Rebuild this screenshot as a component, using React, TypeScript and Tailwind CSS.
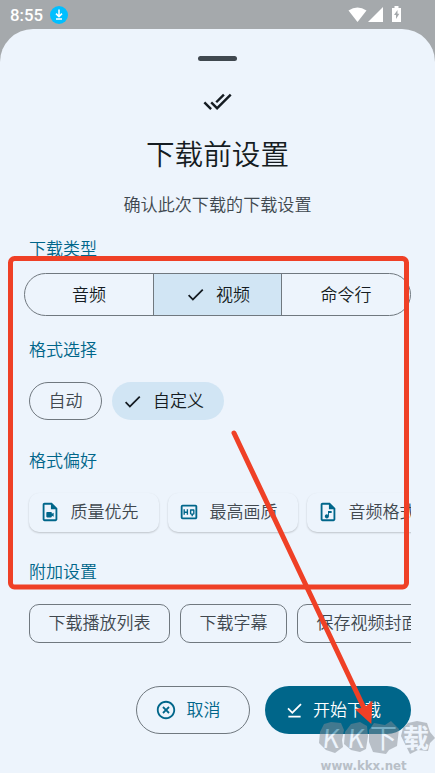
import type { ReactNode } from "react";
import {
  MdCheck,
  MdDoneAll,
  MdDownloadDone,
  MdHighlightOff,
  MdOutlineAudioFile,
  MdOutlineHighQuality,
  MdOutlineVideoFile,
} from "react-icons/md";

function StatusBar() {
  return (
    <div className="flex h-[29px] items-center pl-[10px] text-white">
      <span className="w-[33px] pt-px font-['Roboto',sans-serif] text-[16.8px] leading-[28px] font-medium">8:55</span>
      <svg className="ml-[7px]" width="18" height="18" viewBox="0 0 18 18">
        <circle cx="9" cy="9" r="9" fill="#00bfff" />
        <path d="M9 3.500v6.500M6 7.600l3 3 3-3M6 13h6" fill="none" stroke="#fff" strokeWidth="1.5" />
      </svg>
      <svg className="mr-[33px] ml-auto" width="54" height="17" viewBox="0 0 54 17" fill="#fff">
        <path d="M0.5 4.5Q9.5-1.5 18.5 4.5L9.500 16z" />
        <path d="M35 1v15H20z" />
        <path fillRule="evenodd" d="M46.500 0h4v2h2.500v14h-9V2h2.500zM49.500 4l-3.500 5h2v4l3.400-5.300h-1.900z" />
      </svg>
    </div>
  );
}

function Label({ children }: { children: ReactNode }) {
  return <h2 className="h-6 pl-[5px] text-[17px] leading-6 font-[350] text-[#00668a]">{children}</h2>;
}

function Caption({ children }: { children: ReactNode }) {
  return <span className="pb-[2px]">{children}</span>;
}

function ElevatedChip({ icon, children }: { icon: ReactNode; children: ReactNode }) {
  return (
    <div className="flex h-[39px] w-[130px] shrink-0 items-center gap-[10px] rounded-[10px] bg-[#edf4fc] pl-[9.5px] whitespace-nowrap text-[#40484f] shadow-[0_1px_2px_rgba(0,0,0,0.2)]">
      <span className="text-[22px] text-[#00668a]">{icon}</span>
      <Caption>{children}</Caption>
    </div>
  );
}

function OutlinedChip({ children }: { children: ReactNode }) {
  return (
    <div className="flex h-[39px] shrink-0 items-center rounded-[10px] border border-[#70787f] px-[18.5px] pb-[1px] whitespace-nowrap text-[#40484f]">
      <Caption>{children}</Caption>
    </div>
  );
}

function Annotation() {
  return (
    <svg className="pointer-events-none absolute inset-0" width="435" height="773" viewBox="0 0 435 773">
      <rect x="10.5" y="258.5" width="396" height="328.5" rx="4" fill="none" stroke="#ef4026" strokeWidth="5" />
      <path d="M234 433L363.500 707" stroke="#ef4026" strokeWidth="5" strokeLinecap="round" />
      <path d="M371.300 724L355 709.300L363 707.500L367 705.500L372.500 700.500z" fill="#ef4026" />
    </svg>
  );
}

function Watermark() {
  return (
    <div className="pointer-events-none absolute top-[718px] left-[317px] h-[55px] w-[118px] opacity-50">
      <svg className="absolute inset-0" width="118" height="38" viewBox="0 0 118 38" fill="#858c94">
        <path d="M3 14L7 6 14 4 24 5 27 12 25 22 26 29 18 35 9 32 2 25z" />
        <path d="M28 14L34 6 43 4 50 8 51 18 49 31 43 34 34 32 27 26z" />
        <path d="M52 12L57 5 68 7 74 3 82 11 80 28 72 32 69 36 56 34 52 24z" />
        <path d="M86 10L91 5 100 3 110 5 113 14 118 20 113 25 111 33 101 32 93 36 89 28 84 18z" />
      </svg>
      <div className="absolute top-[1px] left-[6px] flex leading-9 font-normal whitespace-nowrap text-[#edf4fc]">
        <span className="w-[25px] -skew-x-6 text-[26px]">K</span>
        <span className="w-[22px] -skew-x-6 text-[26px]">K</span>
        <span className="w-[33px] text-[27px]">下</span>
        <span className="w-[27px] text-[26px] font-bold">载</span>
      </div>
      <div className="absolute top-[40px] left-[3.500px] font-['DejaVu_Sans',sans-serif] text-[11.800px] leading-4 font-bold whitespace-nowrap text-[#858c94]">
        www.kkx.net
      </div>
    </div>
  );
}

export default function App() {
  return (
    <div className="relative h-[773px] w-[435px] overflow-hidden bg-[#a5a9ac] font-['Noto_Sans_CJK_SC',sans-serif] text-[17px] leading-6 font-[350] text-[#151c22]">
      <StatusBar />
      <main className="flex h-[744px] flex-col rounded-t-[33px] bg-[#edf4fc] px-6">
        <div className="mt-[26.5px] h-[5px] w-[39px] self-center rounded-full bg-[#40484f]" />
        <MdDoneAll className="mt-[26.5px] self-center text-[29px]" />
        <h1 className="mt-[17px] h-10 text-center text-[28.6px] leading-10 font-[350]">下载前设置</h1>
        <p className="mt-[19px] text-center text-[17.1px] text-[#40484f]">确认此次下载的下载设置</p>

        <div className="mt-5">
          <Label>下载类型</Label>
          <div className="mt-[13px] flex h-[43px] overflow-hidden rounded-full border border-[#70787f]">
            <div className="flex w-[128px] items-center justify-center">
              <Caption>音频</Caption>
            </div>
            <div className="flex w-[129px] items-center justify-center gap-[10px] border-x border-[#70787f] bg-[#d1e5f4]">
              <MdCheck className="text-[21px]" />
              <Caption>视频</Caption>
            </div>
            <div className="flex flex-1 items-center justify-center">
              <Caption>命令行</Caption>
            </div>
          </div>
        </div>

        <div className="mt-[21px]">
          <Label>格式选择</Label>
          <div className="mt-[21px] flex h-[38px] gap-[10px] pl-[5px]">
            <div className="flex w-[73px] items-center justify-center rounded-full border border-[#70787f] text-[#40484f]">
              <Caption>自动</Caption>
            </div>
            <div className="flex w-[112px] items-center gap-[10px] rounded-full bg-[#d1e5f4] pl-[10px]">
              <MdCheck className="text-[21px]" />
              <Caption>自定义</Caption>
            </div>
          </div>
        </div>

        <div className="mt-7">
          <Label>格式偏好</Label>
          <div className="flex h-[66px] items-start gap-[9px] overflow-hidden pt-[20.5px] pl-[5px]">
            <ElevatedChip icon={<MdOutlineVideoFile />}>质量优先</ElevatedChip>
            <ElevatedChip icon={<MdOutlineHighQuality />}>最高画质</ElevatedChip>
            <ElevatedChip icon={<MdOutlineAudioFile />}>音频格式</ElevatedChip>
          </div>
        </div>

        <div className="mt-[21px]">
          <Label>附加设置</Label>
          <div className="mt-[21px] flex gap-[10px] overflow-hidden pl-[5px]">
            <OutlinedChip>下载播放列表</OutlinedChip>
            <OutlinedChip>下载字幕</OutlinedChip>
            <OutlinedChip>保存视频封面</OutlinedChip>
          </div>
        </div>

        <div className="mt-[43px] flex justify-end gap-[15px]">
          <button className="flex h-12 w-[114px] items-center gap-[9.5px] rounded-full border border-[#70787f] pl-[18px] text-[#00668a]">
            <MdHighlightOff className="text-[22px]" />
            <Caption>取消</Caption>
          </button>
          <button className="flex h-12 w-[146px] items-center gap-[8px] rounded-full bg-[#00668a] pl-[19px] text-white">
            <MdDownloadDone className="text-[21px]" />
            <Caption>开始下载</Caption>
          </button>
        </div>
      </main>
      <Watermark />
      <Annotation />
    </div>
  );
}
